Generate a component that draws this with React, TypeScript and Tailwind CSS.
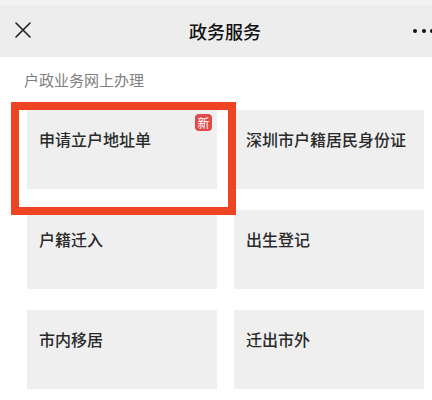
import React from 'react';

const items = [
  { title: '申请立户地址单', isNew: true },
  { title: '深圳市户籍居民身份证' },
  { title: '户籍迁入' },
  { title: '出生登记' },
  { title: '市内移居' },
  { title: '迁出市外' },
];

export default function App() {
  return (
    <div
      className="relative w-[432px] h-[400px] overflow-hidden bg-white"
      style={{ fontFamily: '"Noto Sans CJK SC", "Noto Sans", sans-serif' }}
    >
      {/* Nav bar */}
      <div className="h-[57px] bg-[#ededed] flex items-center relative">
        <div className="absolute top-0 left-0 right-0 h-[5px] bg-[#f3f3f3]" />
        <svg className="ml-[15px] mt-[3px]" width="16" height="16" viewBox="0 0 16 16" fill="none">
          <path d="M1 1 L15 15 M15 1 L1 15" stroke="#222" strokeWidth="1.6" strokeLinecap="round" />
        </svg>
        <div className="absolute left-0 right-0 top-[5px] bottom-0 flex items-center justify-center pl-[18px]">
          <span className="text-[18px] font-medium text-[#111] leading-none">政务服务</span>
        </div>
        <div className="absolute right-0 top-[29px] flex gap-[4.5px] pr-0 translate-x-[2px]">
          <span className="w-[4px] h-[4px] rounded-full bg-[#111]" />
          <span className="w-[4px] h-[4px] rounded-full bg-[#111]" />
          <span className="w-[4px] h-[4px] rounded-full bg-[#111]" />
        </div>
      </div>

      {/* Section label */}
      <div className="pl-[24px] mt-[14px] h-[18px] text-[15px] leading-[18px] text-[#808080]">
        户政业务网上办理
      </div>

      {/* Service grid */}
      <div className="mt-[21px] pl-[27px] pr-[8px] grid grid-cols-[190px_190px] gap-x-[17px] gap-y-[21px]">
        {items.map((it) => (
          <div key={it.title} className="relative h-[79px] bg-[#efefef] pl-[12px] pt-[17px]">
            <span className="text-[16px] leading-[22px] font-medium text-[#2a2a2a]">{it.title}</span>
            {it.isNew && (
              <span className="absolute top-[4px] right-[5px] w-[17px] h-[17px] rounded-[4px] bg-[#e04a48] text-white text-[12px] leading-[17px] text-center">
                新
              </span>
            )}
          </div>
        ))}
      </div>

      {/* Annotation box */}
      <div className="absolute left-[11px] top-[102px] w-[225px] h-[113px] border-[8px] border-[#ef4424]" />
    </div>
  );
}
